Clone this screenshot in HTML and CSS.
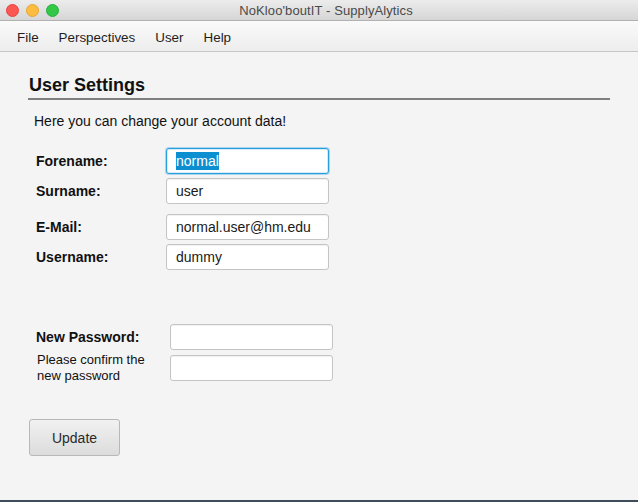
FILE: index.html
```html
<!DOCTYPE html>
<html>
<head>
<meta charset="utf-8">
<link rel="stylesheet" href="styles.css">
</head>
<body>
<div class="window">
  <div class="titlebar">
    <div class="lights">
      <span class="light red"></span>
      <span class="light yellow"></span>
      <span class="light green"></span>
    </div>
    <div class="title">NoKloo'boutIT - SupplyAlytics</div>
  </div>
  <div class="menubar">
    <span class="menu-item">File</span>
    <span class="menu-item">Perspectives</span>
    <span class="menu-item">User</span>
    <span class="menu-item">Help</span>
  </div>
  <div class="content">
    <h1 class="heading">User Settings</h1>
    <p class="intro">Here you can change your account data!</p>
    <div class="form">
      <div class="group">
        <label class="label">Forename:</label>
        <div class="field focused"><span class="selected">normal</span></div>
      </div>
      <div class="group">
        <label class="label">Surname:</label>
        <div class="field">user</div>
      </div>
      <div class="group spaced">
        <label class="label">E-Mail:</label>
        <div class="field">normal.user@hm.edu</div>
      </div>
      <div class="group">
        <label class="label">Username:</label>
        <div class="field">dummy</div>
      </div>
    </div>
    <div class="form pw">
      <div class="group">
        <label class="label">New Password:</label>
        <div class="field"></div>
      </div>
      <div class="group">
        <label class="label small">Please confirm the<br>new password</label>
        <div class="field"></div>
      </div>
    </div>
    <button class="button">Update</button>
  </div>
  <div class="desktop"></div>
</div>
</body>
</html>
```

FILE: styles.css
```css
html, body {
  margin: 0;
  padding: 0;
}
body {
  font-family: "Liberation Sans", Arial, sans-serif;
  background: #f4f4f4;
  color: #111;
}
.window {
  width: 638px;
  height: 502px;
  display: flex;
  flex-direction: column;
  overflow: hidden;
}
.titlebar {
  height: 20px;
  flex: none;
  display: flex;
  align-items: center;
  justify-content: center;
  position: relative;
  background: linear-gradient(#ececec, #d6d6d6);
  border-bottom: 1px solid #b1b1b1;
}
.lights {
  position: absolute;
  left: 6px;
  top: 4px;
  display: flex;
  gap: 7px;
}
.light {
  width: 13px;
  height: 13px;
  border-radius: 50%;
  display: block;
  flex: none;
  box-sizing: border-box;
}
.red { background: #fc5753; border: 1px solid #e5453f; }
.yellow { background: #fdbc40; border: 1px solid #e6a633; }
.green { background: #33c748; border: 1px solid #29b03b; }
.title {
  font-size: 13px;
  color: #4a4a4a;
  letter-spacing: 0.1px;
  padding-left: 14px;
}
.menubar {
  height: 31px;
  flex: none;
  display: flex;
  align-items: center;
  box-sizing: border-box;
  padding-left: 17px;
  padding-top: 3px;
  gap: 20px;
  background: linear-gradient(#fafafa, #ededed);
  border-bottom: 1px solid #c6c6c6;
  font-size: 13.4px;
  color: #1e1e1e;
}
.content {
  flex: 1;
  padding: 22px 28px 0 28px;
  display: flex;
  flex-direction: column;
  align-items: flex-start;
}
.heading {
  margin: 0;
  width: 582px;
  font-size: 18px;
  font-weight: bold;
  line-height: 22px;
  padding-left: 1px;
  padding-bottom: 2px;
  border-bottom: 2px solid #7f7f7f;
  box-sizing: border-box;
}
.intro {
  margin: 12px 0 0 6px;
  font-size: 14px;
  line-height: 18px;
}
.form {
  margin-top: 18px;
  display: flex;
  flex-direction: column;
  gap: 4px;
}
.group {
  display: grid;
  grid-template-columns: 130px 163px;
  align-items: center;
  margin-left: 8px;
}
.group.spaced {
  margin-top: 6px;
}
.label {
  font-size: 14px;
  font-weight: bold;
}
.label.small {
  font-weight: normal;
  font-size: 13px;
  line-height: 16px;
  padding-left: 1px;
  margin: -3px 0;
}
.field {
  height: 26px;
  box-sizing: border-box;
  border: 1px solid #c4c4c4;
  border-radius: 3px;
  background: #fff;
  box-shadow: inset 0 1px 1px rgba(0,0,0,0.06);
  font-size: 14px;
  line-height: 24px;
  padding-left: 9px;
  color: #1a1a1a;
}
.field.focused {
  border: 1px solid #2a9fdc;
  box-shadow: 0 0 0 1px #a8d6ef, inset 0 0 0 1px #d4ecf8;
}
.selected {
  background: #0b8fd1;
  color: #fff;
  padding: 1px 0;
}
.form.pw {
  margin-top: 54px;
  gap: 5px;
}
.form.pw .group {
  grid-template-columns: 134px 163px;
}
.button {
  margin-top: 38px;
  margin-left: 1px;
  width: 91px;
  height: 37px;
  border: 1px solid #b8b8b8;
  border-radius: 3px;
  background: linear-gradient(#f1f1f1, #dcdcdc);
  font-family: "Liberation Sans", Arial, sans-serif;
  font-size: 14px;
  color: #2a2a2a;
  padding: 0;
}
.desktop {
  height: 2px;
  flex: none;
  background: #3d4c5a;
}
```
